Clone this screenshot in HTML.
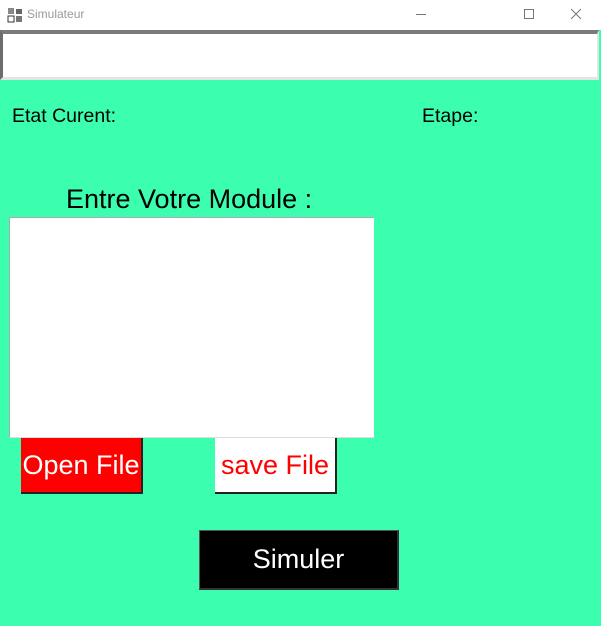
<!DOCTYPE html>
<html><head><meta charset="utf-8"><style>
*{margin:0;padding:0;box-sizing:border-box}
body{width:601px;height:626px;overflow:hidden;background:#3bffaf;font-family:"Liberation Sans",Arial,sans-serif;position:relative}
.abs{position:absolute}
#tb{left:0;top:0;width:601px;height:30px;background:#fff}
#tf{left:0;top:30px;width:599px;height:50px;background:#fff;border-top:4px solid #7a7a7a;border-left:3px solid #6d6d6d;border-right:2px solid #e4e4e4;border-bottom:3px solid #e4e4e4}
.t{color:#000;white-space:nowrap}
.btn{display:flex;align-items:center;justify-content:center;font-size:27px;border-right:2px solid #222;border-bottom:2px solid #222}
</style></head><body>
<div class="abs" id="tb">
 <svg class="abs" style="left:7px;top:7px" width="16" height="16" viewBox="0 0 16 16"><rect x="1" y="1" width="6" height="6" fill="#888"/><rect x="9" y="2" width="6" height="5" fill="#666"/><rect x="1" y="9" width="6" height="6" fill="none" stroke="#333"/><rect x="9" y="9" width="6" height="6" fill="#777"/></svg>
 <div class="abs" style="left:27px;top:7px;font-size:12px;color:#999">Simulateur</div>
 <div class="abs" style="left:416px;top:14px;width:10px;height:1px;background:#777"></div>
 <div class="abs" style="left:524px;top:9px;width:10px;height:10px;border:1px solid #777"></div>
 <svg class="abs" style="left:570px;top:8px" width="12" height="12"><path d="M1 1L11 11M11 1L1 11" stroke="#777"/></svg>
</div>
<div class="abs" id="tf"></div>
<div class="abs t" style="left:12px;top:105px;font-size:19.5px">Etat Curent:</div>
<div class="abs t" style="left:422px;top:105px;font-size:19.5px">Etape:</div>
<div class="abs t" style="left:66px;top:184px;font-size:27px">Entre Votre Module :</div>
<div class="abs" style="left:9px;top:217px;width:365px;height:221px;background:#fff;border-top:1px solid #aaa;border-left:1px solid #aaa;border-bottom:1px solid #ddd"></div>
<div class="abs btn" style="left:21px;top:438px;width:122px;height:56px;background:#f00;color:#fff">Open File</div>
<div class="abs btn" style="left:215px;top:438px;width:122px;height:56px;background:#fff;color:#f00">save File</div>
<div class="abs btn" style="left:199px;top:530px;width:200px;height:60px;background:#000;color:#fff;border:1px solid #555;border-right:2px solid #333;border-bottom:2px solid #333">Simuler</div>
</body></html>
